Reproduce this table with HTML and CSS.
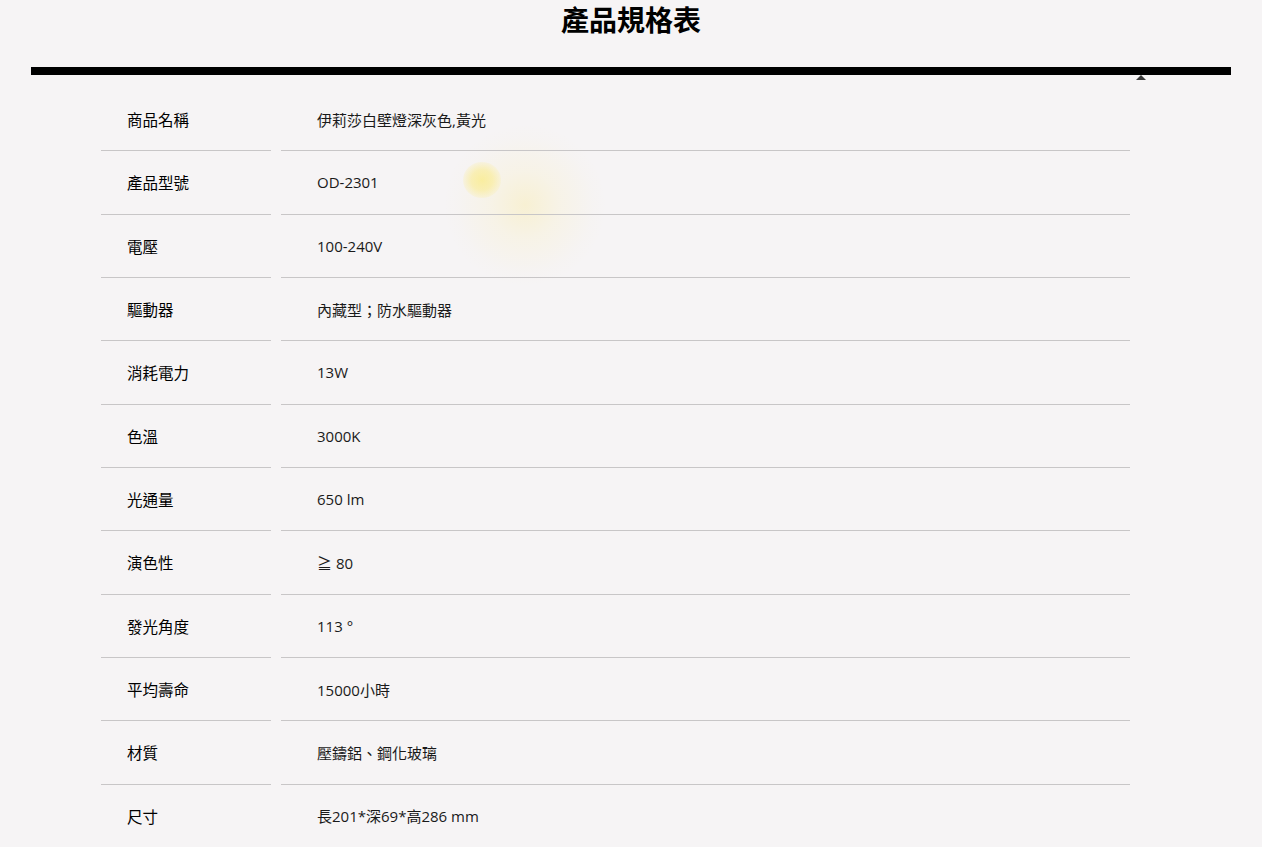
FILE: index.html
```html
<!DOCTYPE html>
<html lang="zh-Hant">
<head>
<meta charset="utf-8">
<title>產品規格表</title>
<link rel="stylesheet" href="styles.css">
</head>
<body>
<div class="page">
  <h1 class="title">產品規格表</h1>
  <div class="bar"></div>
  <span class="up-arrow"></span>
  <div class="glow glow-big"></div>
  <div class="glow glow-small"></div>
  <table class="spec">
    <tbody>
      <tr><th>商品名稱</th><td>伊莉莎白壁燈深灰色,黃光</td></tr>
      <tr><th>產品型號</th><td>OD-2301</td></tr>
      <tr><th>電壓</th><td>100-240V</td></tr>
      <tr><th>驅動器</th><td>內藏型；防水驅動器</td></tr>
      <tr><th>消耗電力</th><td>13W</td></tr>
      <tr><th>色溫</th><td>3000K</td></tr>
      <tr><th>光通量</th><td>650 lm</td></tr>
      <tr><th>演色性</th><td>≧ 80</td></tr>
      <tr><th>發光角度</th><td>113 °</td></tr>
      <tr><th>平均壽命</th><td>15000小時</td></tr>
      <tr><th>材質</th><td>壓鑄鋁、鋼化玻璃</td></tr>
      <tr><th>尺寸</th><td>長201*深69*高286 mm</td></tr>
    </tbody>
  </table>
</div>
</body>
</html>
```

FILE: styles.css
```css
html, body {
  margin: 0;
  padding: 0;
  background: #f6f4f5;
}
body {
  font-family: "Open Sans", "Noto Sans CJK TC", sans-serif;
  color: #111;
  overflow: hidden;
}
.page {
  position: relative;
  width: 1200px;
  margin: 0 0 0 31px;
}
.title {
  margin: 0;
  padding-top: 1px;
  height: 66px;
  text-align: center;
  font-family: "Noto Sans CJK TC", sans-serif;
  font-size: 28px;
  font-weight: 700;
  line-height: 36px;
  color: #000;
}
.bar {
  height: 8px;
  background: #000;
}
.up-arrow {
  position: absolute;
  left: 1105px;
  top: 75px;
  width: 0;
  height: 0;
  border-left: 5px solid transparent;
  border-right: 5px solid transparent;
  border-bottom: 5px solid #3a3a3a;
}
.glow {
  position: absolute;
  border-radius: 50%;
  pointer-events: none;
}
.glow-big {
  left: 414px;
  top: 125px;
  width: 160px;
  height: 160px;
  background: radial-gradient(circle at 50% 50%, rgba(250, 234, 160, 0.4) 0%, rgba(250, 238, 180, 0.22) 30%, rgba(245, 240, 225, 0.12) 60%, rgba(246, 244, 245, 0) 72%);
}
.glow-small {
  left: 432px;
  top: 162px;
  width: 38px;
  height: 36px;
  background: radial-gradient(ellipse at 50% 50%, rgba(250, 236, 140, 0.8) 0%, rgba(250, 236, 150, 0.65) 40%, rgba(250, 238, 170, 0.2) 72%, rgba(246, 244, 245, 0) 88%);
}
.spec {
  position: relative;
  margin-left: 60px;
  margin-top: 13px;
  border-collapse: separate;
  border-spacing: 10px 0;
  width: 1049px;
}
.spec th,
.spec td {
  height: 62.33px;
  padding: 0;
  vertical-align: middle;
  text-align: left;
  border-bottom: 1px solid #c8c6c7;
}
.spec tr:last-child th,
.spec tr:last-child td {
  border-bottom: none;
}
.spec th {
  width: 144px;
  padding-left: 26px;
  font-family: "Noto Sans CJK TC", sans-serif;
  font-size: 15.5px;
  font-weight: 400;
  color: #000;
}
.spec td {
  padding-left: 36px;
  font-size: 15px;
  color: #1a1a1a;
}
```
